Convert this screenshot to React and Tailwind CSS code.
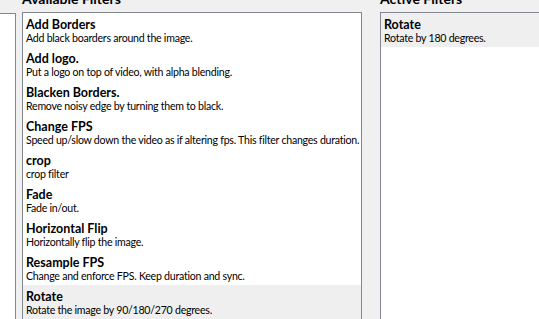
import React from "react";

const available = [
  { name: "Add Borders", desc: "Add black boarders around the image." },
  { name: "Add logo.", desc: "Put a logo on top of video, with alpha blending." },
  { name: "Blacken Borders.", desc: "Remove noisy edge by turning them to black." },
  { name: "Change FPS", desc: "Speed up/slow down the video as if altering fps. This filter changes duration." },
  { name: "crop", desc: "crop filter" },
  { name: "Fade", desc: "Fade in/out." },
  { name: "Horizontal Flip", desc: "Horizontally flip the image." },
  { name: "Resample FPS", desc: "Change and enforce FPS. Keep duration and sync." },
  { name: "Rotate", desc: "Rotate the image by 90/180/270 degrees.", selected: true },
];

const active = [{ name: "Rotate", desc: "Rotate by 180 degrees.", selected: true }];

function FilterItem({ item }) {
  return (
    <div className={`h-[34px] pl-[3px] pt-[5px] whitespace-nowrap ${item.selected ? "bg-[#efefef]" : ""}`}>
      <div className="text-[12.5px] font-bold leading-[14px]">{item.name}</div>
      <div className="text-[10.6px] leading-[12px] tracking-[-0.25px]">{item.desc}</div>
    </div>
  );
}

function FilterList({ title, items, className }) {
  return (
    <div className={`flex flex-col ${className}`}>
      <div className="text-[14px] font-bold leading-[16px] -mt-[9px] mb-[5px] h-[16px]">{title}</div>
      <div className="flex-1 border-l border-r border-t border-[#828790] bg-white">
        {items.map((it) => (
          <FilterItem key={it.name} item={it} />
        ))}
      </div>
    </div>
  );
}

export default function App() {
  return (
    <div
      className="w-[539px] h-[319px] overflow-hidden bg-[#f0f0f0] flex text-black"
      style={{ fontFamily: 'Lato, "Open Sans", sans-serif' }}
    >
      {/* edge of the panel to the left */}
      <div className="w-[16px] mt-[13px] border-t border-r border-[#828790] bg-white shrink-0" />
      <FilterList title="Available Filters" items={available} className="ml-[6px] w-[340px] shrink-0" />
      <FilterList title="Active Filters" items={active} className="ml-[18px] w-[200px] shrink-0" />
    </div>
  );
}
